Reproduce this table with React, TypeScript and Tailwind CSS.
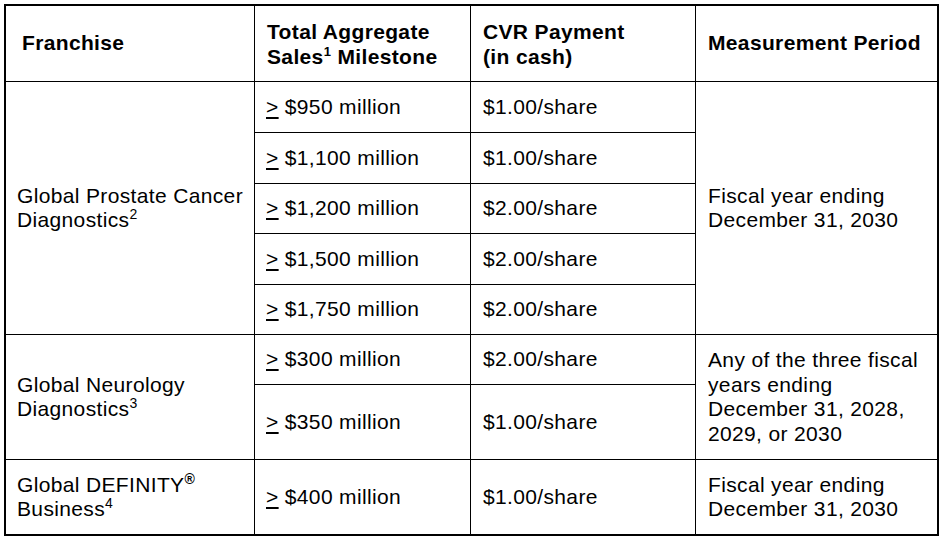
import React from "react";

const font = { fontFamily: '"Liberation Sans", Arial, sans-serif' };

function Ge({ v }: { v: string }) {
  return (
    <span>
      <span className="underline underline-offset-[3px] decoration-[1.5px]">&gt;</span> {v}
    </span>
  );
}

const cell = "bg-white flex items-center pl-[11px] pr-2";

export default function App() {
  return (
    <div className="w-[946px] h-[544px] bg-white pt-[4px] pl-[4px]" style={font}>
      <div className="grid w-[935px] h-[532px] border-2 border-black bg-black gap-px grid-cols-[248px_215px_224px_241px] grid-rows-[75px_50px_50px_49px_50px_49px_49px_74px_74px] text-[21px] leading-[24.5px] tracking-[0.35px] text-black">
        {/* header */}
        <div className={`${cell} pl-[16px] font-bold`}>Franchise</div>
        <div className={`${cell} pl-[12px] font-bold`}>
          <div className="leading-[25px]">
            Total Aggregate
            <br />
            Sales<sup className="text-[13px] -top-[0.6em]">1</sup> Milestone
          </div>
        </div>
        <div className={`${cell} pl-[12px] font-bold`}>
          <div className="leading-[25px]">
            CVR Payment
            <br />
            (in cash)
          </div>
        </div>
        <div className={`${cell} pl-[12px] font-bold`}>Measurement Period</div>

        {/* prostate */}
        <div className={`${cell} pl-[9px] row-span-5`}>
          <div>
            Global Prostate Cancer
            <br />
            Diagnostics<sup className="text-[14px] -top-[0.55em]">2</sup>
          </div>
        </div>
        <div className={cell}><Ge v="$950 million" /></div>
        <div className={`${cell} pl-[12px]`}>$1.00/share</div>
        <div className={`${cell} pl-[12px] row-span-5`}>
          <div>
            Fiscal year ending
            <br />
            December 31, 2030
          </div>
        </div>
        <div className={cell}><Ge v="$1,100 million" /></div>
        <div className={`${cell} pl-[12px]`}>$1.00/share</div>
        <div className={cell}><Ge v="$1,200 million" /></div>
        <div className={`${cell} pl-[12px]`}>$2.00/share</div>
        <div className={cell}><Ge v="$1,500 million" /></div>
        <div className={`${cell} pl-[12px]`}>$2.00/share</div>
        <div className={cell}><Ge v="$1,750 million" /></div>
        <div className={`${cell} pl-[12px]`}>$2.00/share</div>

        {/* neurology */}
        <div className={`${cell} pl-[9px] row-span-2`}>
          <div>
            Global Neurology
            <br />
            Diagnostics<sup className="text-[14px] -top-[0.55em]">3</sup>
          </div>
        </div>
        <div className={cell}><Ge v="$300 million" /></div>
        <div className={`${cell} pl-[12px]`}>$2.00/share</div>
        <div className={`${cell} pl-[12px] row-span-2`}>
          <div>
            Any of the three fiscal
            <br />
            years ending
            <br />
            December 31, 2028,
            <br />
            2029, or 2030
          </div>
        </div>
        <div className={cell}><Ge v="$350 million" /></div>
        <div className={`${cell} pl-[12px]`}>$1.00/share</div>

        {/* definity */}
        <div className={`${cell} pl-[9px]`}>
          <div>
            Global DEFINITY<sup className="text-[14px] font-bold -top-[0.55em]">®</sup>
            <br />
            Business<sup className="text-[14px] -top-[0.55em]">4</sup>
          </div>
        </div>
        <div className={cell}><Ge v="$400 million" /></div>
        <div className={`${cell} pl-[12px]`}>$1.00/share</div>
        <div className={`${cell} pl-[12px]`}>
          <div>
            Fiscal year ending
            <br />
            December 31, 2030
          </div>
        </div>
      </div>
    </div>
  );
}
